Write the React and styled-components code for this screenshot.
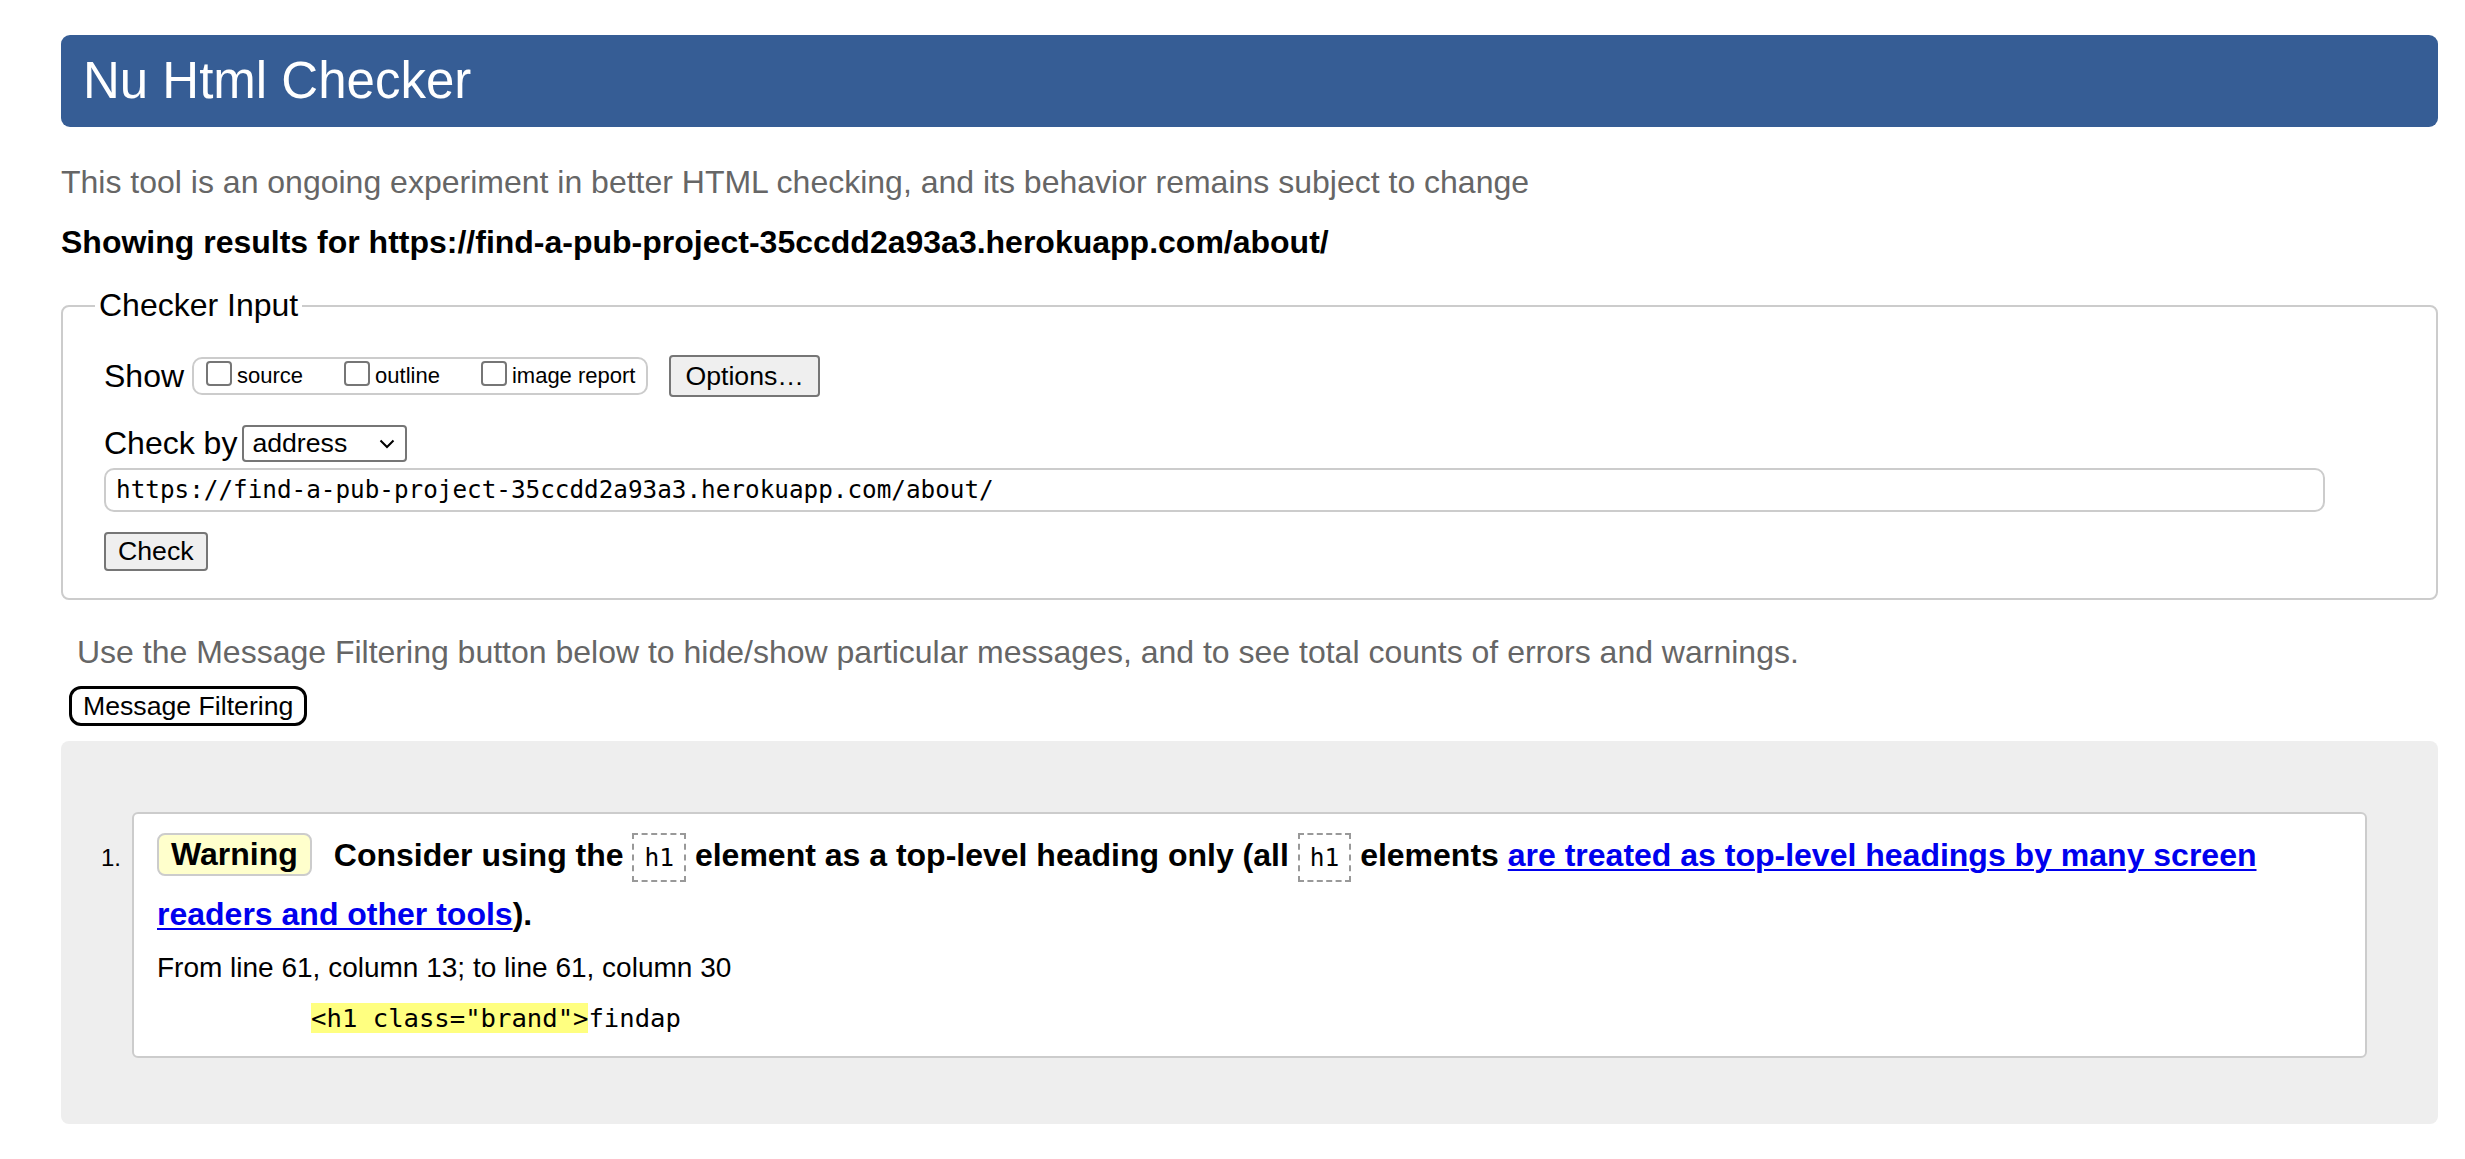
import React from 'react'
import styled, { createGlobalStyle } from 'styled-components'

const GlobalStyle = createGlobalStyle`
  html, body {
    margin: 0;
    padding: 0;
    background: #fff;
  }
  body {
    font-family: Arial, "Liberation Sans", sans-serif;
    color: #000;
  }
`

const Page = styled.div`
  padding: 35px 27px 35px 61px;
  font-size: 32px;
`

const Header = styled.h1`
  margin: 0;
  height: 92px;
  line-height: 92px;
  padding: 0 22px;
  background: #365d95;
  color: #fff;
  font-size: 51px;
  font-weight: normal;
  border-radius: 9px;
`

const Intro = styled.p`
  margin: ${(p) => p.$top || 0}px 0 0 ${(p) => p.$indent || 0}px;
  color: #666;
  font-size: 32px;
  line-height: 37px;
`

const Results = styled.p`
  margin: 23px 0 0;
  font-weight: bold;
  font-size: 32px;
  line-height: 37px;
`

const Fieldset = styled.fieldset`
  margin: 26px 0 0;
  padding: 31px 41px 27px 41px;
  border: 2px solid #ccc;
  border-radius: 8px;
  min-width: 0;
`

const Legend = styled.legend`
  padding: 0 4px;
  margin-left: -9px;
  font-size: 32px;
  line-height: 37px;
`

const Row = styled.div`
  display: flex;
  align-items: center;
  margin-top: ${(p) => p.$top || 0}px;
  height: ${(p) => (p.$h ? `${p.$h}px` : 'auto')};
`

const Label = styled.span`
  font-size: 32px;
  line-height: 37px;
  margin-right: ${(p) => p.$gap || 0}px;
`

const Group = styled.div`
  display: flex;
  align-items: center;
  box-sizing: border-box;
  height: 38px;
  padding: 0 11px 0 12px;
  border: 2px solid #ccc;
  border-radius: 10px;
`

const Option = styled.label`
  display: flex;
  align-items: center;
  font-size: 22px;
  margin-right: ${(p) => (p.$last ? 0 : 41)}px;
`

const Box = styled.span`
  display: inline-block;
  box-sizing: border-box;
  width: 26px;
  height: 25px;
  margin: -6px 5px 0 0;
  border: 2px solid #767676;
  border-radius: 4px;
  background: #fff;
`

const Button = styled.button`
  box-sizing: border-box;
  height: ${(p) => p.$h || 40}px;
  padding: 0 ${(p) => p.$pad || 12}px;
  margin-left: ${(p) => p.$left || 0}px;
  background: #efefef;
  border: 2px solid #767676;
  border-radius: 4px;
  font-family: Arial, "Liberation Sans", sans-serif;
  font-size: 26.67px;
  color: #000;
`

const Select = styled.div`
  display: flex;
  align-items: center;
  justify-content: space-between;
  box-sizing: border-box;
  width: 165px;
  height: 37px;
  margin-left: 5px;
  padding: 0 10px 0 8px;
  border: 2px solid #767676;
  border-radius: 4px;
  background: #fff;
  font-size: 26.67px;
`

const UrlInput = styled.div`
  box-sizing: border-box;
  width: calc(100% - 70px);
  height: 44px;
  margin-top: 6px;
  padding: 0 10px;
  border: 2px solid #ccc;
  border-radius: 10px;
  font-family: "DejaVu Sans Mono", monospace;
  font-size: 24.3px;
  line-height: 40px;
  white-space: nowrap;
`

const CheckRow = styled.div`
  margin-top: 19px;
`

const FilterButton = styled.button`
  display: block;
  box-sizing: border-box;
  height: 40px;
  margin: 15px 0 0 8px;
  padding: 0 11px;
  background: #fff;
  border: 3px solid #000;
  border-radius: 12px;
  font-family: Arial, "Liberation Sans", sans-serif;
  font-size: 26.67px;
  color: #000;
`

const ResultsBox = styled.div`
  margin-top: 15px;
  padding: 71px 71px 66px 40px;
  background: #eee;
  border-radius: 8px;
`

const Item = styled.div`
  display: flex;
  align-items: flex-start;
`

const Number = styled.span`
  width: 31px;
  flex: none;
  font-size: 24px;
  padding-top: 32px;
`

const Card = styled.div`
  flex: 1;
  padding: 13px 23px 23px 23px;
  background: #fff;
  border: 2px solid #ccc;
  border-radius: 6px;
`

const Message = styled.p`
  margin: 0;
  font-weight: bold;
  font-size: 32px;
  line-height: 57px;
`

const Badge = styled.span`
  display: inline-block;
  box-sizing: border-box;
  height: 43px;
  line-height: 39px;
  padding: 0 12px;
  margin-right: 22px;
  background: #ffffcc;
  border: 2px solid #ccc;
  border-radius: 8px;
  vertical-align: 1px;
`

const InlineCode = styled.code`
  font-family: "DejaVu Sans Mono", monospace;
  font-weight: normal;
  font-size: 24.5px;
  padding: 8px 10px;
  border: 2px dashed #999;
`

const Link = styled.a`
  color: #0000ee;
  text-decoration: underline;
  text-decoration-thickness: 2px;
  text-underline-offset: 3px;
`

const Location = styled.p`
  margin: 9px 0 0;
  font-size: 28px;
  line-height: 32px;
`

const Extract = styled.pre`
  margin: 19px 0 0;
  font-family: "DejaVu Sans Mono", monospace;
  font-size: 25.6px;
  line-height: 30px;
`

const Mark = styled.mark`
  background: #ffff80;
  color: #000;
`

const Chevron = () => (
  <svg width="16" height="10" viewBox="0 0 16 10">
    <path d="M1.5 1.5 L8 8 L14.5 1.5" fill="none" stroke="#000" strokeWidth="2" />
  </svg>
)

const App = () => {
  const url = 'https://find-a-pub-project-35ccdd2a93a3.herokuapp.com/about/'
  return (
    <Page>
      <GlobalStyle />
      <Header>Nu Html Checker</Header>
      <Intro $top={37}>
        This tool is an ongoing experiment in better HTML checking, and its behavior remains subject to change
      </Intro>
      <Results>Showing results for {url}</Results>

      <Fieldset>
        <Legend>Checker Input</Legend>
        <Row $h={42}>
          <Label $gap={8}>Show</Label>
          <Group>
            <Option><Box />source</Option>
            <Option><Box />outline</Option>
            <Option $last><Box />image report</Option>
          </Group>
          <Button $left={21} $h={42} $pad={14}>Options…</Button>
        </Row>
        <Row $top={28}>
          <Label>Check by</Label>
          <Select>
            <span>address</span>
            <Chevron />
          </Select>
        </Row>
        <UrlInput>{url}</UrlInput>
        <CheckRow>
          <Button $h={39}>Check</Button>
        </CheckRow>
      </Fieldset>

      <Intro $top={34} $indent={16}>
        Use the Message Filtering button below to hide/show particular messages, and to see total counts of errors and warnings.
      </Intro>
      <FilterButton>Message Filtering</FilterButton>

      <ResultsBox>
        <Item>
          <Number>1.</Number>
          <Card>
            <Message>
              <Badge>Warning</Badge>
              Consider using the <InlineCode>h1</InlineCode> element as a top-level heading only (all{' '}
              <InlineCode>h1</InlineCode> elements{' '}
              <Link href="#">are treated as top-level headings by many screen readers and other tools</Link>).
            </Message>
            <Location>From line 61, column 13; to line 61, column 30</Location>
            <Extract>{'          '}<Mark>{'<h1 class="brand">'}</Mark>findap</Extract>
          </Card>
        </Item>
      </ResultsBox>
    </Page>
  )
}

export default App
